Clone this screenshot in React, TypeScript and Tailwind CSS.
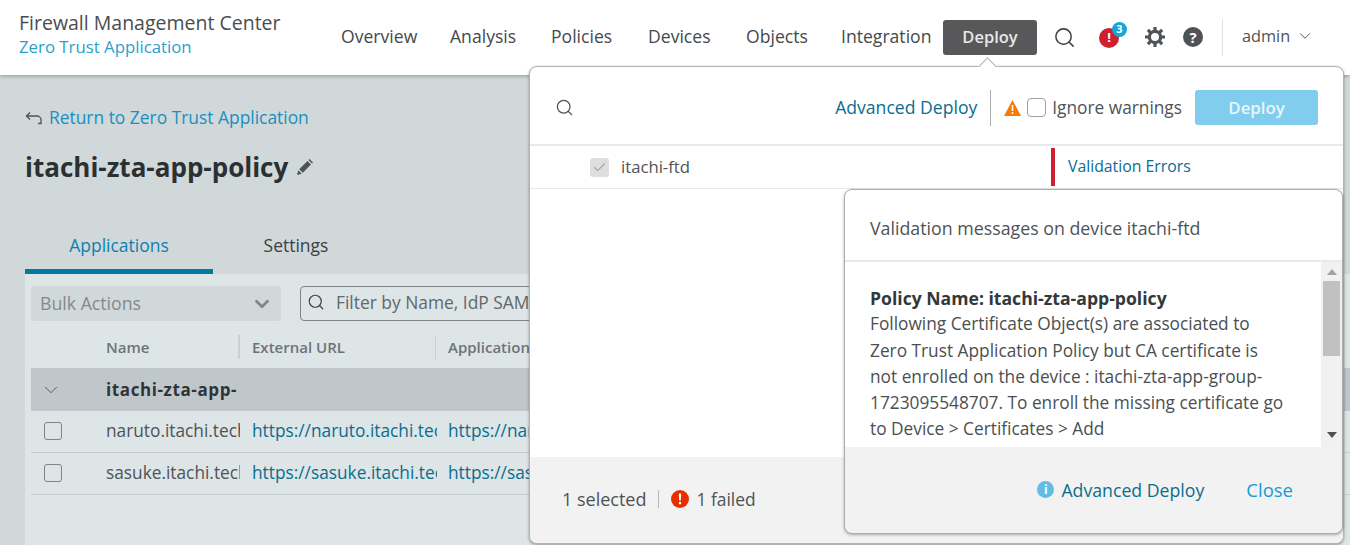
import { ChevronDown, Search, Check } from 'lucide-react';

const navItems = [
  { label: 'Overview', width: 'w-[109px]' },
  { label: 'Analysis', width: 'w-[101px]' },
  { label: 'Policies', width: 'w-[97px]' },
  { label: 'Devices', width: 'w-[98px]' },
  { label: 'Objects', width: 'w-[95px]' },
  { label: 'Integration', width: 'w-[87px]' },
];

const rows = [
  { name: 'naruto.itachi.tech', url: 'https://naruto.itachi.tech', app: 'https://naruto.itachi.tech' },
  { name: 'sasuke.itachi.tech', url: 'https://sasuke.itachi.tech', app: 'https://sasuke.itachi.tech' },
];

function GearIcon() {
  return (
    <svg className="ml-[25px] mt-[26px] h-[22px] w-[22px] text-[#4f5356]" viewBox="0 0 22 22" fill="none" stroke="currentColor">
      <circle cx="11" cy="11" r="5.6" strokeWidth="3.2" />
      <path strokeWidth="3.2" d="M11 1v4M11 17v4M1 11h4M17 11h4M3.9 3.9l2.9 2.9M15.2 15.2l2.9 2.9M3.9 18.1l2.9-2.9M15.2 6.8l2.9-2.9" />
    </svg>
  );
}

function Header() {
  return (
    <header className="relative z-10 flex h-[75px] items-start bg-white shadow-[0_1px_4px_rgba(0,0,0,0.3)]">
      <div className="w-[341px] shrink-0 pl-[19px] pt-[9px]">
        <div className="text-[19.5px] leading-[27px] text-[#4a4d4f]">Firewall Management Center</div>
        <div className="text-[16.8px] leading-[22px] text-[#2a9fce]">Zero Trust Application</div>
      </div>
      <nav className="flex h-[72px] shrink-0 items-center whitespace-nowrap text-[17.6px] text-[#45494c]">
        {navItems.map((item) => (
          <span key={item.label} className={item.width}>{item.label}</span>
        ))}
      </nav>
      <div className="ml-[15px] mt-[20px] flex h-[35px] w-[94px] shrink-0 items-center justify-center rounded-[3px] bg-[#58585b] text-[16.5px] font-semibold text-[#e8e8e8]">
        Deploy
      </div>
      <Search className="ml-[16px] mt-[26px] h-[23px] w-[23px] shrink-0 text-[#3f4346]" strokeWidth={1.6} />
      <div className="relative ml-[23px] mt-[28px] flex h-[20px] w-[20px] shrink-0 items-center justify-center rounded-full bg-[#cf2030] text-[13px] font-bold text-white">
        !
        <span className="absolute left-[13px] top-[-6px] flex h-[15px] w-[15px] items-center justify-center rounded-full bg-[#14a5db] text-[11px] font-bold text-white">3</span>
      </div>
      <GearIcon />
      <div className="ml-[17px] mt-[27px] flex h-[20px] w-[20px] shrink-0 items-center justify-center rounded-full bg-[#4f5356] text-[15px] font-bold text-white">?</div>
      <div className="ml-[19px] mt-[19px] h-[37px] w-px shrink-0 bg-[#dfe1e2]" />
      <div className="ml-[19px] mt-[25px] text-[16.3px] leading-[22px] text-[#4f5356]">admin</div>
      <ChevronDown className="ml-[6px] mt-[27px] h-[18px] w-[18px] shrink-0 text-[#4f5356]" strokeWidth={1.3} />
    </header>
  );
}

function Checkbox() {
  return <span className="block h-[18px] w-[18px] rounded-[3px] border border-[#7d8588]" />;
}

function PolicyPage() {
  return (
    <main className="h-[470px] overflow-hidden bg-[#d0d8da] pl-[25px]">
      <div className="flex items-center pt-[31px] text-[17.4px] leading-[22px] text-[#1b8fc0]">
        <svg className="mr-[6px] mt-[2px] h-[14px] w-[18px] text-[#4f5356]" viewBox="0 0 18 14" fill="none" stroke="currentColor" strokeWidth="1.3">
          <path d="M1.5 5h10.5a4 4 0 0 1 4 4v3.5H13" />
          <path d="M5 1.5 1.5 5 5 8.5" />
        </svg>
        Return to Zero Trust Application
      </div>
      <div className="mt-[24px] flex items-center text-[26px] font-bold leading-[30px] text-[#2b3033]">
        itachi-zta-app-policy
        <svg className="ml-[8px] h-[17px] w-[17px] text-[#4f5356]" viewBox="0 0 17 17" fill="currentColor">
          <path d="M1 16l1.2-4.8 3.6 3.6L1 16zM3.2 10.2 11.5 2l3.5 3.5-8.2 8.2-3.6-3.5zM12.5 1l1-1 3.5 3.5-1 1L12.5 1z" />
        </svg>
      </div>
      <div className="mt-[44px] flex h-[48px] text-[17.5px]">
        <div className="flex w-[188px] justify-center border-b-[5px] border-[#0678a5] pt-[6px] text-[#0f7fb0]">Applications</div>
        <div className="flex w-[166px] justify-center pt-[6px] text-[#3c4043]">Settings</div>
      </div>
      <section className="h-[300px] bg-[#dde5e7] pl-[6px]">
        <div className="flex items-start pt-[12px]">
          <div className="flex h-[35px] w-[250px] items-center justify-between rounded-[3px] bg-[#d0d8da] pl-[9px] pr-[8px] text-[17.7px] text-[#84898c]">
            Bulk Actions
            <ChevronDown className="h-[22px] w-[22px] text-[#7f8689]" strokeWidth={3} />
          </div>
          <div className="ml-[19px] flex h-[35px] w-[400px] items-center whitespace-nowrap rounded-[4px] border border-[#7d8588] pb-[3px] pl-[6px] text-[17.4px] text-[#62686b]">
            <Search className="mr-[11px] h-[18px] w-[18px] text-[#3f4346]" strokeWidth={1.6} />
            Filter by Name, IdP SAML
          </div>
        </div>
        <div className="mt-[7px] grid h-[40px] grid-cols-[209px_196px_196px] items-center pb-[3px] text-[15px] font-semibold text-[#6d7477]">
          <div className="border-r-2 border-[#c9d1d3] pl-[75px] leading-[24px]">Name</div>
          <div className="border-r border-[#c9d1d3] pl-[12px] leading-[24px]">External URL</div>
          <div className="overflow-hidden whitespace-nowrap pl-[12px] leading-[24px]">Application URL</div>
        </div>
        <div className="flex h-[43px] items-center bg-[#bfc7ca]">
          <ChevronDown className="ml-[9px] h-[22px] w-[22px] text-[#4f5356]" strokeWidth={1} />
          <span className="ml-[44px] h-[24px] w-[136px] overflow-hidden text-[17px] font-bold leading-[24px] tracking-[0.6px] text-[#2f3437]">itachi-zta-app-group</span>
        </div>
        {rows.map((row) => (
          <div key={row.name} className="grid h-[42px] grid-cols-[75px_134px_12px_185px_11px_196px] items-center whitespace-nowrap border-b border-[#c3cbcd] pb-[2px] text-[17.3px]">
            <div className="pl-[13px]"><Checkbox /></div>
            <div className="overflow-hidden text-[#4f5356]">{row.name}</div>
            <div />
            <div className="overflow-hidden text-[#0a6d8f]">{row.url}</div>
            <div />
            <div className="overflow-hidden text-[#0a6d8f]">{row.app}</div>
          </div>
        ))}
      </section>
    </main>
  );
}

function ValidationPopover() {
  return (
    <div className="absolute bottom-[9px] right-0 top-[122px] flex w-[499px] flex-col rounded-[8px] border border-[#a8adb0] bg-[#f2f2f2] shadow-[0_1px_3px_rgba(0,0,0,0.3)]">
      <div className="flex h-[72px] shrink-0 items-center rounded-t-[8px] border-b-2 border-[#e8e9ea] bg-white pl-[25px] pt-[6px] text-[17.8px] text-[#4f5356]">
        Validation messages on device itachi-ftd
      </div>
      <div className="flex h-[185px] shrink-0">
        <div className="w-[476px] whitespace-nowrap bg-white pl-[25px] pt-[23px] text-[17.3px] leading-[26.3px] text-[#4a4f52]">
          <div className="text-[17.6px] font-bold text-[#33383b]">Policy Name: itachi-zta-app-policy</div>
          Following Certificate Object(s) are associated to<br />
          Zero Trust Application Policy but CA certificate is<br />
          not enrolled on the device : itachi-zta-app-group-<br />
          1723095548707. To enroll the missing certificate go<br />
          to Device &gt; Certificates &gt; Add
        </div>
        <div className="flex w-[21px] flex-col items-center bg-[#f1f1f1]">
          <svg className="mt-[7px] h-[6px] w-[10px] text-[#a3a3a3]" viewBox="0 0 10 6" fill="currentColor"><path d="M5 0l5 6H0z" /></svg>
          <div className="mt-[6px] h-[75px] w-[17px] bg-[#c1c1c1]" />
          <svg className="mb-[9px] mt-auto h-[6px] w-[10px] text-[#505050]" viewBox="0 0 10 6" fill="currentColor"><path d="M0 0h10L5 6z" /></svg>
        </div>
      </div>
      <div className="flex items-center justify-end pr-[49px] pt-[29px] text-[17.7px]">
        <span className="mr-[7px] flex h-[17px] w-[17px] items-center justify-center rounded-full bg-[#64bbe3] text-[12px] font-bold text-white">i</span>
        <span className="text-[#0a6d8f]">Advanced Deploy</span>
        <span className="ml-[42px] text-[18.5px] text-[#149bd2]">Close</span>
      </div>
    </div>
  );
}

function DeployDropdown() {
  return (
    <div className="absolute left-[529px] top-[66px] z-20 flex h-[478px] w-[815px] flex-col rounded-[8px] border border-[#b0b4b6] bg-white shadow-[0_1px_3px_rgba(0,0,0,0.35)]">
      {/* caret under the Deploy button */}
      <div className="absolute left-[451px] top-[-7px] h-[13px] w-[13px] rotate-45 border-l border-t border-[#b0b4b6] bg-white" />
      <div className="flex h-[79px] shrink-0 items-center border-b-2 border-[#e8e9ea] pl-[25px] pr-[25px] pt-[4px]">
        <Search className="h-[19px] w-[19px] text-[#4f5356]" strokeWidth={1.6} />
        <span className="ml-auto text-[17.6px] text-[#0a6d8f]">Advanced Deploy</span>
        <div className="ml-[13px] h-[36px] w-px bg-[#a9adaf]" />
        <svg className="ml-[13px] h-[16px] w-[17px]" viewBox="0 0 17 16">
          <path d="M8.5 0 17 16H0z" fill="#f57c00" />
          <path d="M7.7 5h1.6v6H7.7zM7.7 12h1.6v2H7.7z" fill="#fff" />
        </svg>
        <span className="ml-[6px] block h-[19px] w-[19px] rounded-[4px] border border-[#9ca1a4]" />
        <span className="ml-[6px] text-[17.3px] text-[#4f5356]">Ignore warnings</span>
        <div className="ml-[13px] flex h-[35px] w-[123px] items-center justify-center rounded-[3px] bg-[#80cdee] text-[16.8px] font-semibold text-[#eaf6fb]">Deploy</div>
      </div>
      <div className="flex h-[43px] shrink-0 items-center border-b border-[#e8e9ea] pl-[60px]">
        <span className="flex h-[19px] w-[19px] items-center justify-center rounded-[3px] bg-[#dedede]">
          <Check className="h-[15px] w-[15px] text-[#a9a9a9]" strokeWidth={2} />
        </span>
        <span className="ml-[12px] w-[69px] whitespace-nowrap pb-[1px] text-[16.7px] text-[#4f5356]">itachi-ftd</span>
        <div className="ml-[361px] h-[38px] w-[4px] bg-[#cf2030]" />
        <span className="ml-[13px] text-[15.8px] text-[#0a6d8f]">Validation Errors</span>
      </div>
      <div className="flex-1" />
      <div className="flex h-[86px] shrink-0 items-center rounded-b-[8px] bg-[#f2f2f2] pb-[2px] pl-[32px] text-[17.4px] text-[#4f5356]">
        <span className="text-[18px]">1 selected</span>
        <div className="mx-[12px] h-[18px] w-px bg-[#b5b8ba]" />
        <svg className="mr-[7px] h-[18px] w-[18px]" viewBox="0 0 18 18">
          <circle cx="9" cy="9" r="9" fill="#e62e00" />
          <path d="M7.8 3.5h2.4l-.4 7H8.2zM7.9 12h2.2v2.3H7.9z" fill="#fff" />
        </svg>
        1 failed
      </div>
      <ValidationPopover />
    </div>
  );
}

export default function App() {
  return (
    <div className="relative h-[545px] w-[1350px] overflow-hidden font-['Open_Sans','Liberation_Sans',sans-serif]">
      <Header />
      <PolicyPage />
      <DeployDropdown />
    </div>
  );
}
